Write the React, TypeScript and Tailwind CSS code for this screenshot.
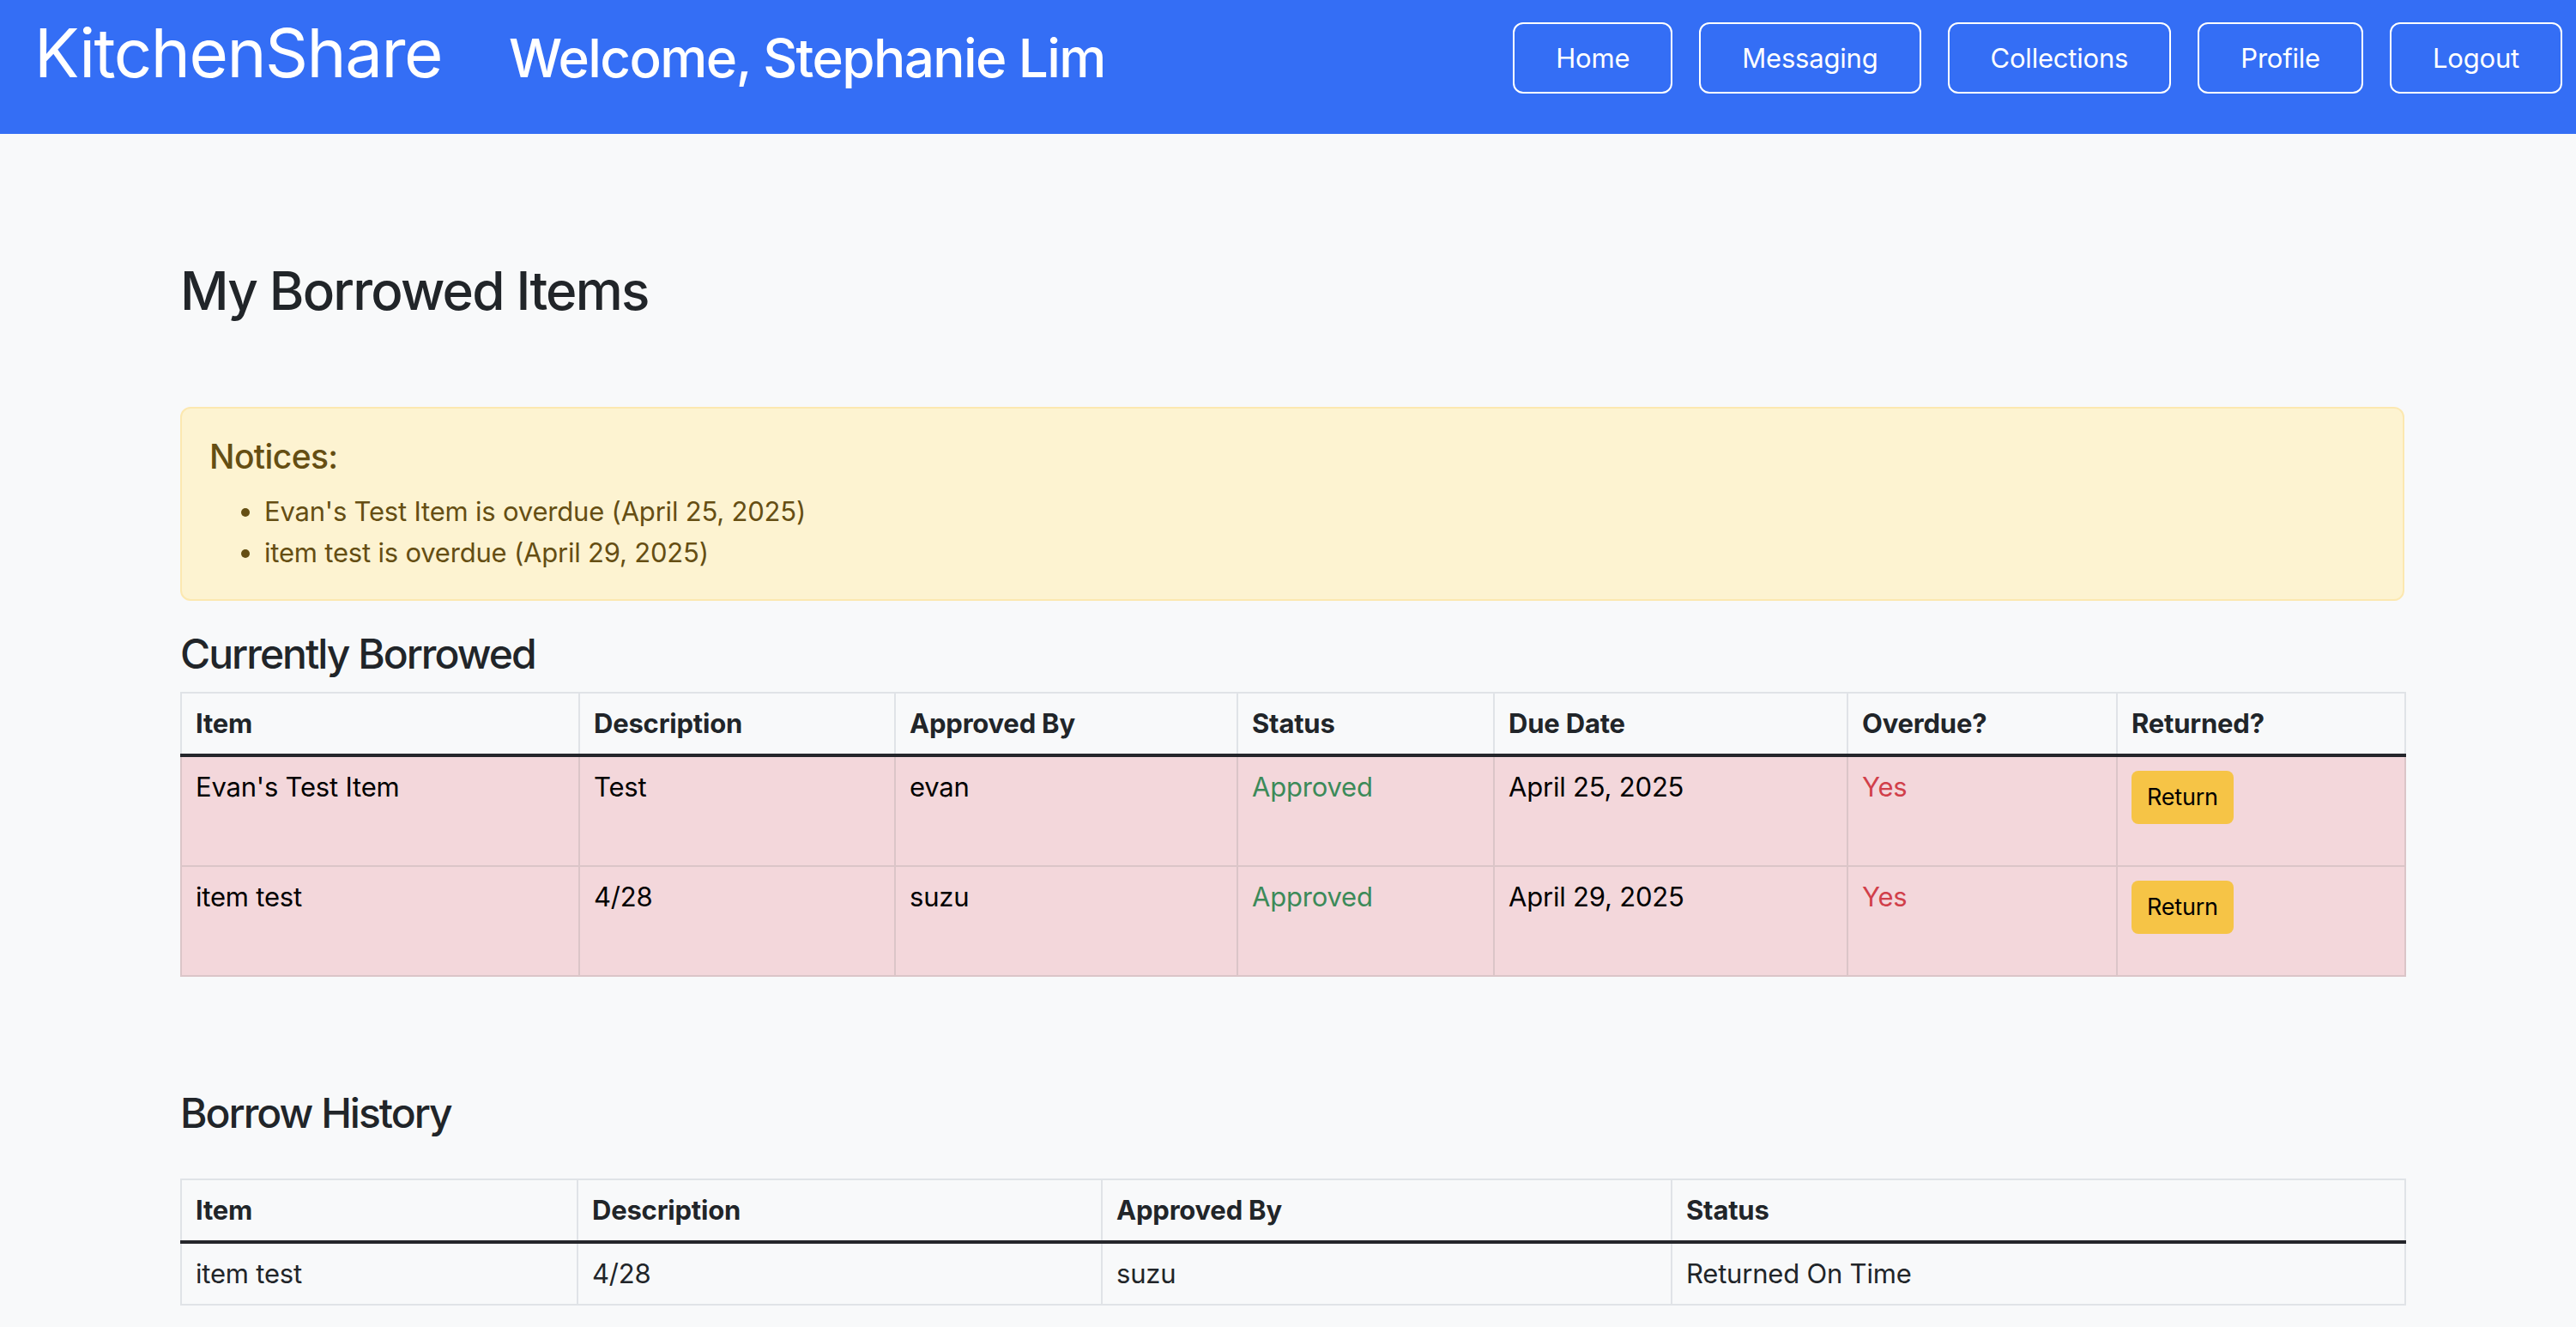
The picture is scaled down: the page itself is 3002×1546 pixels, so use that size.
import React from "react";

const navItems = ["Home", "Messaging", "Collections", "Profile", "Logout"];

type Row = {
  item: string;
  desc: string;
  by: string;
  status: string;
  due: string;
  overdue: string;
};

const current: Row[] = [
  { item: "Evan's Test Item", desc: "Test", by: "evan", status: "Approved", due: "April 25, 2025", overdue: "Yes" },
  { item: "item test", desc: "4/28", by: "suzu", status: "Approved", due: "April 29, 2025", overdue: "Yes" },
];

const thCls =
  "border-2 border-[#e0e3e7] px-[16px] pt-[16px] pb-[16px] text-left align-top font-bold leading-[38px]";
const tdCls =
  "border-2 border-[#dbc5c8] px-[16px] pt-[16px] pb-[16px] align-top leading-[38px] bg-[#f3d7db]";
const td2Cls =
  "border-2 border-[#e0e3e7] px-[16px] pt-[16px] pb-[16px] align-top leading-[38px]";

export default function App() {
  return (
    <div className="min-h-[1546px] bg-[#f8f9fa] font-['Inter',sans-serif] text-[#212529]">
      <header className="flex h-[156px] items-start justify-between bg-[#346ef5] text-white">
        <div className="flex items-baseline pl-[40px] pt-[15px]">
          <h1 className="text-[78px] font-normal leading-[94px] tracking-[-1.5px]">KitchenShare</h1>
          <h2 className="ml-[78px] text-[62px] font-medium leading-[74px] tracking-[-1.6px]">
            Welcome, Stephanie Lim
          </h2>
        </div>
        <nav className="flex gap-[31px] pr-[16px] pt-[26px]">
          {navItems.map((n) => (
            <button
              key={n}
              className="flex h-[83px] items-center rounded-[12px] border-2 border-white px-[48px] text-[31px] leading-[48px] tracking-[-0.2px] text-white"
            >
              {n}
            </button>
          ))}
        </nav>
      </header>

      <main className="ml-[210px] w-[2592px] pb-[27px] text-[31px] tracking-[-0.2px]">
        <h2 className="mt-[146px] text-[62px] font-medium leading-[74px] tracking-[-1.8px]">My Borrowed Items</h2>

        <div className="mt-[98px] rounded-[12px] border-2 border-[#fce8b0] bg-[#fdf3d1] px-[32px] pb-[30px] pt-[32px] text-[#654e13]">
          <h5 className="mb-[16px] text-[39px] font-medium leading-[48px] tracking-[-0.6px]">Notices:</h5>
          <ul className="list-disc pl-[64px] leading-[48px]">
            <li>Evan's Test Item is overdue (April 25, 2025)</li>
            <li>item test is overdue (April 29, 2025)</li>
          </ul>
        </div>

        <h4 className="mt-[33px] mb-[15px] text-[48px] font-medium leading-[58px] tracking-[-2px]">Currently Borrowed</h4>
        <table className="w-full table-fixed border-collapse">
          <colgroup>
            <col className="w-[464px]" />
            <col className="w-[368px]" />
            <col className="w-[399px]" />
            <col className="w-[299px]" />
            <col className="w-[412px]" />
            <col className="w-[314px]" />
            <col className="w-[336px]" />
          </colgroup>
          <thead>
            <tr>
              <th className={thCls}>Item</th>
              <th className={thCls}>Description</th>
              <th className={thCls}>Approved By</th>
              <th className={thCls}>Status</th>
              <th className={thCls}>Due Date</th>
              <th className={thCls}>Overdue?</th>
              <th className={thCls}>Returned?</th>
            </tr>
          </thead>
          <tbody>
            {current.map((r, i) => (
              <tr key={i} className={i === 0 ? "[&>td]:border-t-4 [&>td]:border-t-[#25262b]" : ""}>
                <td className={`${tdCls} text-black`}>{r.item}</td>
                <td className={`${tdCls} text-black`}>{r.desc}</td>
                <td className={`${tdCls} text-black`}>{r.by}</td>
                <td className={`${tdCls} text-[#3c8a59]`}>{r.status}</td>
                <td className={`${tdCls} text-black`}>{r.due}</td>
                <td className={`${tdCls} text-[#d13f4a]`}>{r.overdue}</td>
                <td className={tdCls}>
                  <button className="mb-[32px] block h-[62px] rounded-[8px] bg-[#f6c446] px-[18px] text-[27px] leading-[42px] text-black">
                    Return
                  </button>
                </td>
              </tr>
            ))}
          </tbody>
        </table>

        <h4 className="mt-[130px] mb-[47px] text-[48px] font-medium leading-[58px] tracking-[-2px]">Borrow History</h4>
        <table className="w-full table-fixed border-collapse">
          <colgroup>
            <col className="w-[462px]" />
            <col className="w-[611px]" />
            <col className="w-[664px]" />
            <col className="w-[855px]" />
          </colgroup>
          <thead>
            <tr>
              <th className={thCls}>Item</th>
              <th className={thCls}>Description</th>
              <th className={thCls}>Approved By</th>
              <th className={thCls}>Status</th>
            </tr>
          </thead>
          <tbody>
            <tr className="[&>td]:border-t-4 [&>td]:border-t-[#25262b]">
              <td className={td2Cls}>item test</td>
              <td className={td2Cls}>4/28</td>
              <td className={td2Cls}>suzu</td>
              <td className={td2Cls}>Returned On Time</td>
            </tr>
          </tbody>
        </table>
      </main>
    </div>
  );
}
